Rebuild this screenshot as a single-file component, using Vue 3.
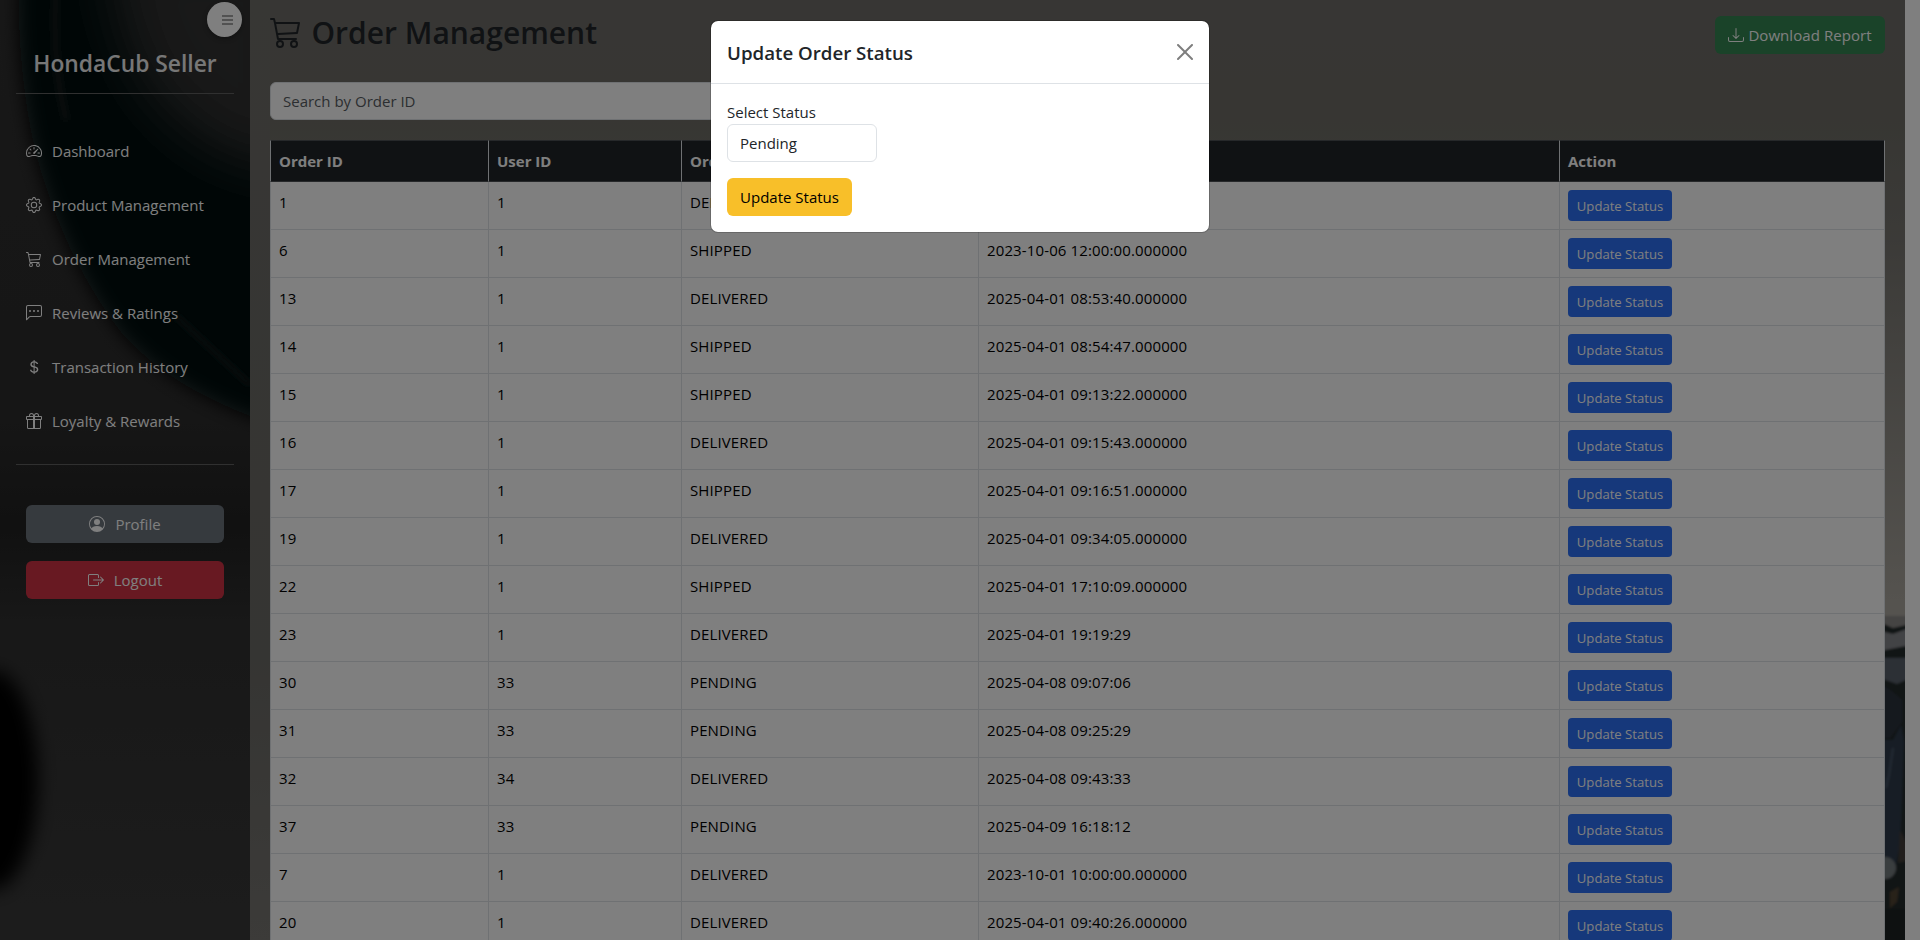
<script setup>
import { ref } from 'vue'

const icons = {
  speedometer: [
    'M8 4a.5.5 0 0 1 .5.5V6a.5.5 0 0 1-1 0V4.5A.5.5 0 0 1 8 4M3.732 5.732a.5.5 0 0 1 .707 0l.915.914a.5.5 0 1 1-.708.708l-.914-.915a.5.5 0 0 1 0-.707M2 10a.5.5 0 0 1 .5-.5h1.586a.5.5 0 0 1 0 1H2.5A.5.5 0 0 1 2 10m9.5 0a.5.5 0 0 1 .5-.5h1.5a.5.5 0 0 1 0 1H12a.5.5 0 0 1-.5-.5m.754-4.246a.39.39 0 0 0-.527-.02L7.547 9.31a.91.91 0 1 0 1.302 1.258l3.434-4.297a.39.39 0 0 0-.029-.518z',
    'M0 10a8 8 0 1 1 15.547 2.661c-.442 1.253-1.845 1.602-2.932 1.25C11.309 13.488 9.475 13 8 13c-1.474 0-3.31.488-4.615.911-1.087.352-2.49.003-2.932-1.25A8 8 0 0 1 0 10m8-7a7 7 0 0 0-6.603 9.329c.203.575.923.876 1.68.63C4.397 12.533 6.358 12 8 12s3.604.532 4.923.96c.757.245 1.477-.056 1.68-.631A7 7 0 0 0 8 3'
  ],
  gear: [
    'M8 4.754a3.246 3.246 0 1 0 0 6.492 3.246 3.246 0 0 0 0-6.492M5.754 8a2.246 2.246 0 1 1 4.492 0 2.246 2.246 0 0 1-4.492 0',
    'M9.796 1.343c-.527-1.79-3.065-1.79-3.592 0l-.094.319a.873.873 0 0 1-1.255.52l-.292-.16c-1.64-.892-3.433.902-2.54 2.541l.159.292a.873.873 0 0 1-.52 1.255l-.319.094c-1.79.527-1.79 3.065 0 3.592l.319.094a.873.873 0 0 1 .52 1.255l-.16.292c-.892 1.64.901 3.434 2.541 2.54l.292-.159a.873.873 0 0 1 1.255.52l.094.319c.527 1.79 3.065 1.79 3.592 0l.094-.319a.873.873 0 0 1 1.255-.52l.292.16c1.64.893 3.434-.902 2.54-2.541l-.159-.292a.873.873 0 0 1 .52-1.255l.319-.094c1.79-.527 1.79-3.065 0-3.592l-.319-.094a.873.873 0 0 1-.52-1.255l.16-.292c.893-1.64-.902-3.433-2.541-2.54l-.292.159a.873.873 0 0 1-1.255-.52zm-2.633.283c.246-.835 1.428-.835 1.674 0l.094.319a1.873 1.873 0 0 0 2.693 1.115l.291-.16c.764-.415 1.6.42 1.184 1.185l-.159.292a1.873 1.873 0 0 0 1.116 2.692l.318.094c.835.246.835 1.428 0 1.674l-.319.094a1.873 1.873 0 0 0-1.115 2.693l.16.291c.415.764-.42 1.6-1.185 1.184l-.291-.159a1.873 1.873 0 0 0-2.693 1.116l-.094.318c-.246.835-1.428.835-1.674 0l-.094-.319a1.873 1.873 0 0 0-2.692-1.115l-.292.16c-.764.415-1.6-.42-1.184-1.185l.159-.291A1.873 1.873 0 0 0 1.945 8.93l-.319-.094c-.835-.246-.835-1.428 0-1.674l.319-.094A1.873 1.873 0 0 0 3.06 4.377l-.16-.292c-.415-.764.42-1.6 1.185-1.184l.292.159a1.873 1.873 0 0 0 2.692-1.115z'
  ],
  cart: [
    'M0 1.5A.5.5 0 0 1 .5 1H2a.5.5 0 0 1 .485.379L2.89 3H14.5a.5.5 0 0 1 .49.598l-1 5a.5.5 0 0 1-.465.401l-9.397.472L4.415 11H13a.5.5 0 0 1 0 1H4a.5.5 0 0 1-.491-.408L2.01 3.607 1.61 2H.5a.5.5 0 0 1-.5-.5M3.102 4l.84 4.479 9.144-.459L13.89 4zM5 12a2 2 0 1 0 0 4 2 2 0 0 0 0-4m7 0a2 2 0 1 0 0 4 2 2 0 0 0 0-4m-7 1a1 1 0 1 1 0 2 1 1 0 0 1 0-2m7 0a1 1 0 1 1 0 2 1 1 0 0 1 0-2'
  ],
  chat: [
    'M14 1a1 1 0 0 1 1 1v8a1 1 0 0 1-1 1H4.414A2 2 0 0 0 3 11.586l-2 2V2a1 1 0 0 1 1-1zM2 0a2 2 0 0 0-2 2v12.793a.5.5 0 0 0 .854.353l2.853-2.853A1 1 0 0 1 4.414 12H14a2 2 0 0 0 2-2V2a2 2 0 0 0-2-2z',
    'M5 6a1 1 0 1 1-2 0 1 1 0 0 1 2 0m4 0a1 1 0 1 1-2 0 1 1 0 0 1 2 0m4 0a1 1 0 1 1-2 0 1 1 0 0 1 2 0'
  ],
  dollar: [
    'M4 10.781c.148 1.667 1.513 2.85 3.591 3.003V15h1.043v-1.216c2.27-.179 3.678-1.438 3.678-3.3 0-1.59-.947-2.51-2.956-3.028l-.722-.187V3.467c1.122.11 1.879.714 2.07 1.616h1.47c-.166-1.6-1.54-2.748-3.54-2.875V1H7.591v1.233c-1.939.23-3.27 1.472-3.27 3.156 0 1.454.966 2.483 2.661 2.917l.61.162v4.031c-1.149-.17-1.94-.8-2.131-1.718zm3.391-3.836c-1.043-.263-1.6-.825-1.6-1.616 0-.944.704-1.641 1.8-1.828v3.495l-.2-.05zm1.591 1.872c1.287.323 1.852.859 1.852 1.769 0 1.097-.826 1.828-2.2 1.939V8.73z'
  ],
  gift: [
    'M3 2.5a2.5 2.5 0 0 1 5 0 2.5 2.5 0 0 1 5 0v.006c0 .07 0 .27-.038.494H15a1 1 0 0 1 1 1v2a1 1 0 0 1-1 1v7.5a1.5 1.5 0 0 1-1.5 1.5h-11A1.5 1.5 0 0 1 1 14.5V7a1 1 0 0 1-1-1V4a1 1 0 0 1 1-1h2.038A3 3 0 0 1 3 2.506zm1.068.5H7v-.5a1.5 1.5 0 1 0-3 0c0 .085.002.274.045.43zM9 3h2.932l.023-.07c.043-.156.045-.345.045-.43a1.5 1.5 0 0 0-3 0zM1 4v2h6V4zm8 0v2h6V4zm5 3H9v8h4.5a.5.5 0 0 0 .5-.5zm-7 8V7H2v7.5a.5.5 0 0 0 .5.5z'
  ],
  person: [
    'M11 6a3 3 0 1 1-6 0 3 3 0 0 1 6 0',
    'M0 8a8 8 0 1 1 16 0A8 8 0 0 1 0 8m8-7a7 7 0 0 0-5.468 11.37C3.242 11.226 4.805 10 8 10s4.757 1.225 5.468 2.37A7 7 0 0 0 8 1'
  ],
  logout: [
    'M10 12.5a.5.5 0 0 1-.5.5h-8a.5.5 0 0 1-.5-.5v-9a.5.5 0 0 1 .5-.5h8a.5.5 0 0 1 .5.5v2a.5.5 0 0 0 1 0v-2A1.5 1.5 0 0 0 9.5 2h-8A1.5 1.5 0 0 0 0 3.5v9A1.5 1.5 0 0 0 1.5 14h8a1.5 1.5 0 0 0 1.5-1.5v-2a.5.5 0 0 0-1 0z',
    'M15.854 8.354a.5.5 0 0 0 0-.708l-3-3a.5.5 0 0 0-.708.708L14.293 7.5H5.5a.5.5 0 0 0 0 1h8.793l-2.147 2.146a.5.5 0 0 0 .708.708z'
  ],
  download: [
    'M.5 9.9a.5.5 0 0 1 .5.5v2.5a1 1 0 0 0 1 1h12a1 1 0 0 0 1-1v-2.5a.5.5 0 0 1 1 0v2.5a2 2 0 0 1-2 2H2a2 2 0 0 1-2-2v-2.5a.5.5 0 0 1 .5-.5',
    'M7.646 11.854a.5.5 0 0 0 .708 0l3-3a.5.5 0 0 0-.708-.708L8.5 10.293V1.5a.5.5 0 0 0-1 0v8.793L5.354 8.146a.5.5 0 1 0-.708.708z'
  ],
  close: [
    'M.293.293a1 1 0 0 1 1.414 0L8 6.586 14.293.293a1 1 0 1 1 1.414 1.414L9.414 8l6.293 6.293a1 1 0 0 1-1.414 1.414L8 9.414l-6.293 6.293a1 1 0 0 1-1.414-1.414L6.586 8 .293 1.707a1 1 0 0 1 0-1.414'
  ]
}

const nav = [
  { icon: 'speedometer', label: 'Dashboard' },
  { icon: 'gear', label: 'Product Management' },
  { icon: 'cart', label: 'Order Management' },
  { icon: 'chat', label: 'Reviews & Ratings' },
  { icon: 'dollar', label: 'Transaction History' },
  { icon: 'gift', label: 'Loyalty & Rewards' }
]

const orders = [
  [1, 1, 'DELIVERED', '2023-10-01 10:00:00.000000'],
  [6, 1, 'SHIPPED', '2023-10-06 12:00:00.000000'],
  [13, 1, 'DELIVERED', '2025-04-01 08:53:40.000000'],
  [14, 1, 'SHIPPED', '2025-04-01 08:54:47.000000'],
  [15, 1, 'SHIPPED', '2025-04-01 09:13:22.000000'],
  [16, 1, 'DELIVERED', '2025-04-01 09:15:43.000000'],
  [17, 1, 'SHIPPED', '2025-04-01 09:16:51.000000'],
  [19, 1, 'DELIVERED', '2025-04-01 09:34:05.000000'],
  [22, 1, 'SHIPPED', '2025-04-01 17:10:09.000000'],
  [23, 1, 'DELIVERED', '2025-04-01 19:19:29'],
  [30, 33, 'PENDING', '2025-04-08 09:07:06'],
  [31, 33, 'PENDING', '2025-04-08 09:25:29'],
  [32, 34, 'DELIVERED', '2025-04-08 09:43:33'],
  [37, 33, 'PENDING', '2025-04-09 16:18:12'],
  [7, 1, 'DELIVERED', '2023-10-01 10:00:00.000000'],
  [20, 1, 'DELIVERED', '2025-04-01 09:40:26.000000']
]

const status = ref('Pending')
</script>

<template>
  <div class="page">
    <aside class="sidebar">
      <svg class="texture" viewBox="0 0 250 940" preserveAspectRatio="none" aria-hidden="true">
        <defs>
          <filter id="soft" x="-30%" y="-30%" width="160%" height="160%"><feGaussianBlur stdDeviation="9" /></filter>
          <filter id="wide" x="-50%" y="-50%" width="200%" height="200%"><feGaussianBlur stdDeviation="26" /></filter>
          <filter id="faint" x="-100%" y="-10%" width="300%" height="120%"><feGaussianBlur stdDeviation="3" /></filter>
          <linearGradient id="base" x1="0" y1="0" x2="0" y2="1">
            <stop offset="0" stop-color="#303030" />
            <stop offset=".45" stop-color="#2c2c2c" />
            <stop offset=".56" stop-color="#222" />
            <stop offset=".66" stop-color="#303030" />
            <stop offset="1" stop-color="#393939" />
          </linearGradient>
        </defs>
        <rect width="250" height="940" fill="url(#base)" />
        <path d="M18-20C18 50 24 120 44 182C62 238 88 290 122 334C155 370 200 400 275 425V-20Z" fill="#060808" filter="url(#soft)" />
        <path d="M110-60C115 20 130 80 180 120C210 150 240 160 300 170V-60Z" fill="#303030" filter="url(#wide)" />
        <path d="M56-10C53 40 56 80 66 120" fill="none" stroke="#242424" stroke-width="4" filter="url(#faint)" />
        <path d="M175 315L250 385" fill="none" stroke="#151b1b" stroke-width="5" filter="url(#faint)" />
        <ellipse cx="-8" cy="780" rx="46" ry="110" fill="#000" filter="url(#soft)" />
      </svg>
      <button class="toggle" aria-label="Toggle menu"><span></span><span></span><span></span></button>
      <h3 class="brand">HondaCub Seller</h3>
      <hr class="rule" />
      <ul class="nav">
        <li v-for="item in nav" :key="item.label">
          <svg class="icon" viewBox="0 0 16 16"><path v-for="d in icons[item.icon]" :key="d" :d="d" /></svg>
          <span>{{ item.label }}</span>
        </li>
      </ul>
      <hr class="rule" />
      <div class="account">
        <button class="btn profile">
          <svg class="icon" viewBox="0 0 16 16"><path v-for="d in icons.person" :key="d" :d="d" fill-rule="evenodd" /></svg>
          <span>Profile</span>
        </button>
        <button class="btn logout">
          <svg class="icon" viewBox="0 0 16 16"><path v-for="d in icons.logout" :key="d" :d="d" /></svg>
          <span>Logout</span>
        </button>
      </div>
    </aside>

    <main class="content">
      <svg class="scenery" viewBox="0 0 20 340" preserveAspectRatio="none" aria-hidden="true">
        <defs><filter id="blurred"><feGaussianBlur stdDeviation="1.3" /></filter></defs>
        <g filter="url(#blurred)">
          <rect x="-5" y="24" width="30" height="340" fill="#24292c" />
          <path d="M-5 16H25V24L8 28L-5 22Z" fill="#8a8886" />
          <path d="M-5 31L8 34L25 28V45L-5 51Z" fill="#84868a" />
          <path d="M-5 58H25V78L12 84L-5 78Z" fill="#59616a" />
          <path d="M-5 84L8 92L17 100V122L5 138H-5Z" fill="#2b333d" />
          <path d="M8 140L16 125L19 142L15 245L10 268L-5 262V140Z" fill="#2d3b4c" />
          <path d="M8 148L4 175L1 188" stroke="#485666" stroke-width="2" fill="none" />
          <circle cx="0" cy="268" r="11" fill="#747b7e" />
          <path d="M15 230L25 250V260L13 263Z" fill="#423e38" />
          <path d="M5 292L14 287L12 302L5 308Z" fill="#514431" />
          <rect x="-5" y="309" width="30" height="40" fill="#1c2224" />
        </g>
      </svg>
      <header class="top">
        <h2>
          <svg class="icon" viewBox="0 0 16 16"><path :d="icons.cart[0]" /></svg>
          <span>Order Management</span>
        </h2>
        <button class="btn download">
          <svg class="icon" viewBox="0 0 16 16"><path v-for="d in icons.download" :key="d" :d="d" /></svg>
          <span>Download Report</span>
        </button>
      </header>
      <input class="search" type="text" placeholder="Search by Order ID" />
      <table>
        <colgroup><col class="c1" /><col class="c2" /><col class="c3" /><col class="c4" /><col class="c5" /></colgroup>
        <thead>
          <tr><th>Order ID</th><th>User ID</th><th>Order Status</th><th>Order Date</th><th>Action</th></tr>
        </thead>
        <tbody>
          <tr v-for="row in orders" :key="row[0]">
            <td v-for="(cell, i) in row" :key="i">{{ cell }}</td>
            <td><button class="update">Update Status</button></td>
          </tr>
        </tbody>
      </table>
    </main>

    <div class="backdrop"></div>
    <section class="modal" role="dialog">
      <div class="modal-head">
        <h5>Update Order Status</h5>
        <svg class="icon close" viewBox="0 0 16 16"><path :d="icons.close[0]" /></svg>
      </div>
      <div class="modal-body">
        <label>Select Status</label>
        <div class="select">{{ status }}</div>
        <button class="btn confirm">Update Status</button>
      </div>
    </section>
  </div>
</template>

<style>
body {
  overflow: hidden;
}
</style>

<style scoped>
* {
  box-sizing: border-box;
}
.page {
  position: relative;
  display: flex;
  width: 1920px;
  height: 940px;
  overflow: hidden;
  background: #fff;
  color: #212529;
  font-family: "Open Sans", "Noto Sans", sans-serif;
  font-size: 15px;
  line-height: 24px;
}
h2, h3, h5, ul {
  margin: 0;
  padding: 0;
  font-weight: 600;
}
button, input {
  font: inherit;
}
.icon {
  flex: none;
  width: 16px;
  height: 16px;
  fill: currentColor;
}
.btn {
  display: flex;
  align-items: center;
  justify-content: center;
  height: 38px;
  padding: 0;
  border: 0;
  border-radius: 6px;
  color: #fff;
}

.sidebar {
  position: relative;
  flex: none;
  width: 250px;
  height: 940px;
  padding: 35px 16px 0;
  color: #fff;
}
.texture {
  position: absolute;
  inset: 0;
  width: 250px;
  height: 940px;
}
.brand, .rule, .nav, .account {
  position: relative;
}
.toggle {
  position: absolute;
  top: 2px;
  left: 207px;
  display: flex;
  flex-direction: column;
  gap: 2px;
  width: 35px;
  height: 35px;
  padding: 13px 0 0 15px;
  border: 0;
  border-radius: 50%;
  background: #fff;
  box-shadow: 0 2px 5px rgba(0, 0, 0, 0.3);
}
.toggle span {
  width: 11px;
  height: 2px;
  background: #a4a4a4;
}
.brand {
  height: 58px;
  font-size: 22.8px;
  line-height: 58px;
  text-align: center;
  color: #eee;
}
.rule {
  height: 1px;
  margin: 0;
  border: 0;
  background: #606060;
}
.nav {
  padding: 30px 10px 16px;
  list-style: none;
  font-weight: 400;
}
.nav li {
  display: flex;
  align-items: center;
  gap: 10px;
  height: 54px;
}
.account {
  display: flex;
  flex-direction: column;
  gap: 18px;
  padding: 40px 10px 0;
}
.account .btn {
  gap: 10px;
}
.profile {
  background: #6c747d;
}
.logout {
  background: #d13344;
}

.content {
  position: relative;
  flex: none;
  width: 1655px;
  height: 940px;
  padding: 16px 20px 0;
  background: linear-gradient(to bottom, #6e6d69 0, #6e6d66 120px, #777570 240px, #aaa69e 600px);
}
.content::before {
  content: "";
  position: absolute;
  inset: 0 auto 0 0;
  width: 20px;
  background: linear-gradient(#6f6e69, #6b6a66 70%, #787672);
}
.scenery {
  position: absolute;
  right: 0;
  bottom: 0;
  width: 20px;
  height: 340px;
}
.top {
  position: relative;
  display: flex;
  justify-content: space-between;
  height: 66px;
}
.top h2 {
  display: flex;
  align-items: flex-start;
  gap: 9.5px;
  height: 36px;
  font-size: 30px;
  line-height: 36px;
}
.top h2 span {
  margin-top: -1px;
}
.top h2 .icon {
  width: 32px;
  height: 32px;
}
.download {
  gap: 4px;
  width: 170px;
  background: #348653;
  letter-spacing: 0.06px;
}
.search {
  position: relative;
  display: block;
  width: 807px;
  height: 38px;
  margin-bottom: 20px;
  padding: 0 12px;
  border: 1px solid #dee2e6;
  border-radius: 6px;
  background: #fff;
}
.search::placeholder {
  color: #585d62;
}
table {
  position: relative;
  width: 1615px;
  table-layout: fixed;
  border-collapse: separate;
  border-spacing: 0;
}
.c1 { width: 219px; }
.c2 { width: 193px; }
.c3 { width: 297px; }
.c4 { width: 581px; }
.c5 { width: 325px; }
th {
  height: 42px;
  padding: 0 8px;
  border: 1px solid #dee2e6;
  border-width: 1px 1px 1px 0;
  border-top-color: #4d5154;
  border-bottom-color: #4d5154;
  background: #212529;
  color: #fff;
  font-weight: 700;
  text-align: left;
}
td {
  height: 48px;
  padding: 8px 8px 0;
  border-right: 1px solid #dee2e6;
  border-bottom: 1px solid #dee2e6;
  background: #fff;
  color: #000;
  letter-spacing: 0.13px;
  vertical-align: top;
}
th:first-child, td:first-child {
  border-left: 1px solid #dee2e6;
}
.update {
  display: block;
  width: 104px;
  height: 31px;
  padding: 0;
  border: 0;
  border-radius: 4px;
  background: #2d71f6;
  color: #fff;
  font-size: 13.1px;
  letter-spacing: 0;
  line-height: 32px;
}

.backdrop {
  position: absolute;
  inset: 0;
  background: rgba(0, 0, 0, 0.5);
}
.modal {
  position: absolute;
  top: 20px;
  left: 710px;
  width: 500px;
  height: 213px;
  border: 1px solid rgba(0, 0, 0, 0.18);
  border-radius: 8px;
  background: #fff;
  background-clip: padding-box;
}
.modal-head {
  display: flex;
  align-items: center;
  justify-content: space-between;
  height: 63px;
  padding: 0 16px;
  border-bottom: 1px solid #dee2e6;
}
.modal-head h5 {
  padding-top: 2px;
  font-size: 18.7px;
  line-height: 30px;
}
.close {
  color: #000;
  opacity: 0.5;
}
.modal-body {
  padding: 16px;
}
.modal-body label {
  display: block;
}
.select {
  width: 150px;
  height: 38px;
  margin-bottom: 16px;
  padding: 6px 12px;
  border: 1px solid #dee2e6;
  border-radius: 6px;
}
.confirm {
  width: 125px;
  background: #f8bf29;
  color: #000;
}
</style>
